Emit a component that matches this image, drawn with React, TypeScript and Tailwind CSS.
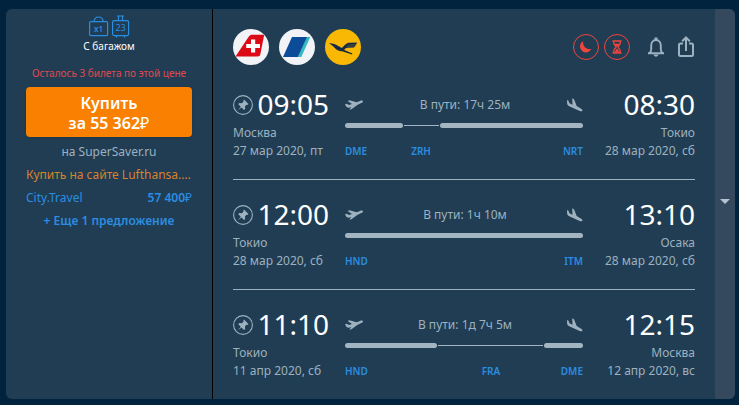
import { useState } from 'react';

interface Flight {
  weight: number;
  kind: 'air' | 'stop';
  code?: string;
}

interface Point {
  time: string;
  city: string;
  date: string;
  code: string;
}

interface Segment {
  id: number;
  from: Point;
  to: Point;
  duration: string;
  track: Flight[];
}

const segments: Segment[] = [
  {
    id: 1,
    from: { time: '09:05', city: 'Москва', date: '27 мар 2020, пт', code: 'DME' },
    to: { time: '08:30', city: 'Токио', date: '28 мар 2020, сб', code: 'NRT' },
    duration: '17ч 25м',
    track: [
      { kind: 'air', weight: 58 },
      { kind: 'stop', weight: 36, code: 'ZRH' },
      { kind: 'air', weight: 144 },
    ],
  },
  {
    id: 2,
    from: { time: '12:00', city: 'Токио', date: '28 мар 2020, сб', code: 'HND' },
    to: { time: '13:10', city: 'Осака', date: '28 мар 2020, сб', code: 'ITM' },
    duration: '1ч 10м',
    track: [{ kind: 'air', weight: 238 }],
  },
  {
    id: 3,
    from: { time: '11:10', city: 'Токио', date: '11 апр 2020, сб', code: 'HND' },
    to: { time: '12:15', city: 'Москва', date: '12 апр 2020, вс', code: 'DME' },
    duration: '1д 7ч 5м',
    track: [
      { kind: 'air', weight: 93 },
      { kind: 'stop', weight: 106, code: 'FRA' },
      { kind: 'air', weight: 39 },
    ],
  },
];

function BaggageIcon() {
  return (
    <svg width="42" height="24" viewBox="0 0 42 24" fill="none" stroke="#2b8de0" strokeWidth="1.2" aria-hidden="true">
      <rect x="1.6" y="6.6" width="18" height="14" rx="1" />
      <path d="M6 6.4C6.4 3.400 8 2 10.600 2s4.200 1.400 4.600 4.400" />
      <rect x="24.600" y="5.600" width="16" height="15" rx="1.500" />
      <path d="M29 1h7M30.500 1v4.500M34.500 1v4.500M28.500 20.600v2M36.500 20.600v2" />
      <text x="10.600" y="16.500" textAnchor="middle" fontSize="8" fontWeight="600" fill="#2b8de0" stroke="none">x1</text>
      <text x="32.600" y="16" textAnchor="middle" fontSize="9" fill="#2b8de0" stroke="none">23</text>
    </svg>
  );
}

function SwissLogo() {
  return (
    <svg width="36" height="36" viewBox="0 0 36 36" role="img" aria-label="Swiss">
      <circle cx="18" cy="18" r="18" fill="#f2f3f7" />
      <path d="M2.500 27.500 15.500 8c1.200-1.700 2-2.200 3.800-2.200h11.900L27.400 25c-.4 1.800-1.200 2.500-3 2.500z" fill="#dc0a17" />
      <path d="M18 10.500h4.200v4.500H27v4h-4.800v4.500H18v-4.500h-4.800v-4H18z" fill="#fff" />
    </svg>
  );
}

function StripeLogo() {
  return (
    <svg width="36" height="36" viewBox="0 0 36 36" role="img" aria-label="Stripes">
      <circle cx="18" cy="18" r="18" fill="#f2f3f7" />
      <path d="M27.600 8H31.300L22.300 28H18.400z" fill="#35b9c5" />
      <path d="M13 8H28L18.800 28H4z" fill="#0c4b97" />
    </svg>
  );
}

function LufthansaLogo() {
  return (
    <svg width="36" height="36" viewBox="0 0 36 36" role="img" aria-label="Lufthansa">
      <circle cx="18" cy="18" r="18" fill="#f9b804" />
      <path
        d="M4 14.300c2.700-.3 5 .4 7.500 1.800l5.300 3c2-1.800 3-3.700 5-4.700 1-.5 1.800-.6 3-.6l7.400-.2-1.200 1.800-.8 1.600-1.300 1.600-6.400.2c-1.500.1-2.800 1-3.300 2.100l8.200 3.600-.4.900-9.900-3.200c-3.500.1-5.300-1.100-7.600-3.500C8 17.100 7 16.400 4 14.300z"
        fill="#152a48"
      />
      <path d="M22.500 16l9-.3M21.500 17.500l9-.4" stroke="#7d6a26" strokeWidth=".5" />
    </svg>
  );
}

function MoonIcon() {
  return (
    <svg width="14" height="14" viewBox="0 0 14 14" fill="#f0453c" aria-hidden="true">
      <path d="M4.200 1.200C2.300 2 1 4 1 6.300 1 9.500 3.500 12.500 6.800 12.500c2.600 0 4.800-1.500 5.700-3.900-1 .5-1.900.7-2.900.5C6.200 8.700 3.600 5.400 4.200 1.200z" />
    </svg>
  );
}

function HourglassIcon() {
  return (
    <svg width="14" height="14" viewBox="0 0 14 14" fill="none" stroke="#f0453c" strokeWidth="1.300" aria-hidden="true">
      <path d="M2.500 1h9M2.500 13h9M3.800 1v2.200C3.800 5 6 5.800 6 7s-2.200 2-2.200 3.800V13M10.200 1v2.200C10.200 5 8 5.800 8 7s2.200 2 2.200 3.800V13" />
      <path d="M4.200 3.800h5.600L7 7zM4.200 12.500 7 8.600l2.800 3.900z" fill="#f0453c" stroke="none" />
    </svg>
  );
}

function BellIcon() {
  return (
    <svg width="18" height="22" viewBox="0 0 18 22" fill="none" aria-hidden="true">
      <path
        d="M1 17.200h16M2.500 17c1.200-.8 1.700-2 1.700-3.500V9.500c0-3.200 2-5.500 4.800-5.500s4.800 2.300 4.800 5.500v4c0 1.500.5 2.700 1.700 3.500"
        stroke="#9eb1bf"
        strokeWidth="1.900"
      />
      <path d="M7.500 1.500h3v3h-3zM6.500 18.500h5c-.3 1.400-1.200 2.200-2.500 2.200s-2.200-.8-2.500-2.200z" fill="#9eb1bf" />
    </svg>
  );
}

function ShareIcon() {
  return (
    <svg width="18" height="22" viewBox="0 0 18 22" fill="none" stroke="#9eb1bf" strokeWidth="2" aria-hidden="true">
      <path d="M6 7.500H3.500C2.600 7.500 2 8.100 2 9v9.500c0 .9.600 1.500 1.500 1.500h11c.9 0 1.500-.6 1.500-1.500V9c0-.9-.6-1.500-1.500-1.500H12" />
      <path d="M9 15V2M5.200 5.300 9 1.500l3.800 3.800" />
    </svg>
  );
}

function PinIcon() {
  return (
    <svg className="block" width="20" height="20" viewBox="0 0 20 20" aria-hidden="true">
      <circle cx="10" cy="10" r="9.400" fill="none" stroke="#9eb1bf" strokeWidth="1.100" />
      <path
        d="M11 4.600 15.400 9l-1 .9-1-.2-1.500 1.700.3 2.500-1.200 1-2.500-2.500-3.600 2.900 2.900-3.600-2.500-2.500 1-1.200 2.500.3 1.700-1.500-.2-1z"
        fill="#9eb1bf"
      />
    </svg>
  );
}

function TakeoffIcon() {
  return (
    <svg width="18" height="10" viewBox="0 0 18 10" fill="#9eb1bf" aria-hidden="true">
      <path d="M0 4.200 1.700 3.800 4 5 7 4 2.600 1 4.500.3l7.200 2L15 .9c1.200-.4 2.500-.4 2.900.2.300.7-.6 1.500-1.600 2l-4 1.900L6.500 9.200l-2.200.5 2-2.600L4 7.700c-1.300.2-2.200-.3-2.800-1.100z" />
    </svg>
  );
}

function LandingIcon() {
  return (
    <svg width="16" height="14" viewBox="0 0 16 14" fill="#9eb1bf" aria-hidden="true">
      <path d="M0 2 1.500 2.700l1 2.500 3 1.500L5.200.2 7 1.200l2.700 6.900 4.100 2.500c1.100.7 1.900 1.500 1.600 2.200-.4.700-1.600.6-2.700.1L2.200 8.200C.9 7.500.2 6.600.1 5.400z" />
    </svg>
  );
}

function Track({ segment }: { segment: Segment }) {
  const { from, to, track, duration } = segment;
  return (
    <div className="min-w-0">
      <div className="flex h-9 items-center justify-between">
        <TakeoffIcon />
        <span>В пути: {duration}</span>
        <LandingIcon />
      </div>
      <div className="flex h-[5px] items-center">
        {track.map((part, i) => (
          <div
            key={i}
            className={part.kind === 'air' ? 'h-[5px] basis-0 rounded-full bg-[#a3b5c1]' : 'mx-px h-px basis-0 bg-[#a3b5c1]'}
            style={{ flexGrow: part.weight }}
          />
        ))}
      </div>
      <div className="mt-3.5 flex text-[10px] leading-[18px] font-semibold text-[#2b8de0]">
        {track.map((part, i) => (
          <div key={i} className="flex min-w-0 basis-0 justify-between" style={{ flexGrow: part.weight }}>
            {i === 0 && <a href="#from">{from.code}</a>}
            {part.code && <a href="#stop" className="mx-auto">{part.code}</a>}
            {i === track.length - 1 && <a href="#to" className="ml-auto">{to.code}</a>}
          </div>
        ))}
      </div>
    </div>
  );
}

function SegmentRow({ segment }: { segment: Segment }) {
  const [pinned, setPinned] = useState(false);
  const { from, to } = segment;

  return (
    <section className="grid grid-cols-[96px_1fr_96px] gap-4 border-b border-[#9eb1bf] pt-[17px] pb-[19px] text-xs leading-[18px] text-[#9eb1bf] last:border-b-0">
      <div className="whitespace-nowrap">
        <div className="mb-px flex h-9 items-center justify-between">
          <button type="button" aria-label="Закрепить" aria-pressed={pinned} onClick={() => setPinned(!pinned)}>
            <PinIcon />
          </button>
          <span className="pb-0.5 text-[28px] leading-[34px] text-white">{from.time}</span>
        </div>
        <p>{from.city}</p>
        <p>{from.date}</p>
      </div>
      <Track segment={segment} />
      <div className="text-right whitespace-nowrap">
        <p className="mb-px pb-0.5 text-[28px] leading-[34px] text-white">{to.time}</p>
        <p>{to.city}</p>
        <p>{to.date}</p>
      </div>
    </section>
  );
}

function Offers() {
  return (
    <aside className="flex w-[207px] shrink-0 flex-col border-r border-black px-5 pt-1.5 text-xs text-[#2b8de0]">
      <div className="flex flex-col items-center">
        <BaggageIcon />
        <p className="text-[10px] leading-[14px] text-white">С багажом</p>
      </div>
      <p className="mt-3 text-center text-[10px] leading-4 whitespace-nowrap text-[#e0484e]">
        Осталось 3 билета по этой цене
      </p>
      <button type="button" className="mt-1.5 rounded bg-[#f98000] pt-1.5 pb-1 text-base leading-5 font-semibold text-white shadow-sm">
        Купить
        <br />
        за 55 362<span className="font-normal">₽</span>
      </button>
      <p className="mt-[3px] text-center leading-[23px] text-[#9eb1bf]">на SuperSaver.ru</p>
      <a href="#lufthansa" className="leading-[23px] whitespace-nowrap text-[#d9822b]">
        Купить на сайте Lufthansa.…
      </a>
      <a href="#city" className="flex justify-between leading-[23px]">
        <span>City.Travel</span>
        <span className="font-semibold">57 400<span className="font-normal">₽</span></span>
      </a>
      <button type="button" className="leading-[23px] font-semibold">
        + Еще 1 предложение
      </button>
    </aside>
  );
}

export default function App() {
  return (
    <div className="min-h-screen bg-[#02233d] pt-[9px] pr-1 pb-1.5 pl-1.5 font-['Noto_Sans',sans-serif]">
      <article className="flex overflow-hidden rounded-md bg-[#203d54]">
        <Offers />
        <main className="min-w-0 flex-1 px-5">
          <header className="flex items-center justify-between pt-5 pb-[5px]">
            <div className="flex gap-2.5">
              <SwissLogo />
              <StripeLogo />
              <LufthansaLogo />
            </div>
            <div className="flex items-center">
              <div className="flex gap-[5px]">
                <span className="flex size-[26px] items-center justify-center rounded-full border border-[#f0453c]">
                  <MoonIcon />
                </span>
                <span className="flex size-[26px] items-center justify-center rounded-full border border-[#f0453c]">
                  <HourglassIcon />
                </span>
              </div>
              <button type="button" aria-label="Следить за ценой" className="ml-[17px]">
                <BellIcon />
              </button>
              <button type="button" aria-label="Поделиться" className="ml-3">
                <ShareIcon />
              </button>
            </div>
          </header>
          {segments.map((segment) => (
            <SegmentRow key={segment.id} segment={segment} />
          ))}
        </main>
        <button type="button" aria-label="Подробнее" className="flex w-5 shrink-0 items-center justify-center bg-[#34495d] pb-1.5">
          <svg width="10" height="5" viewBox="0 0 10 5" fill="#b4c3cd" aria-hidden="true">
            <path d="M0 0h10L5 5z" />
          </svg>
        </button>
      </article>
    </div>
  );
}
